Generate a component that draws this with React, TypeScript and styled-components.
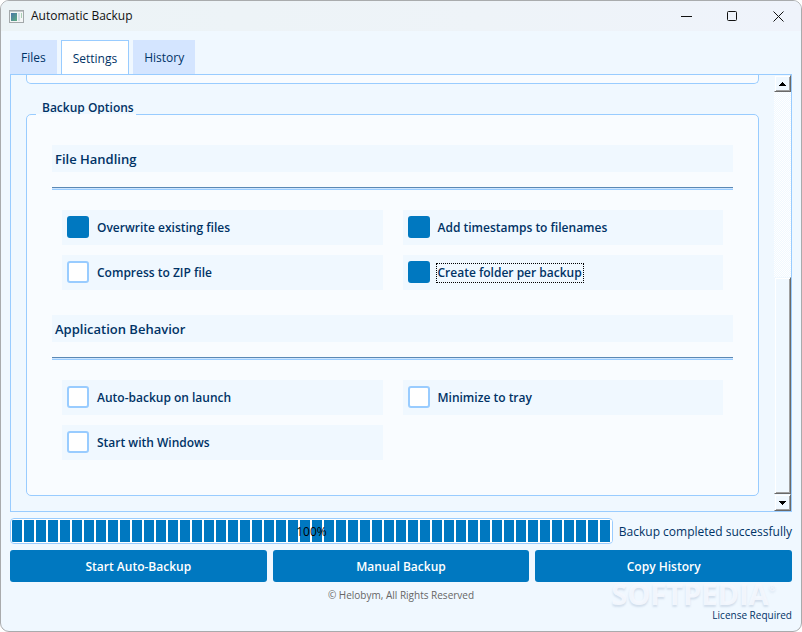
import React, { useState } from 'react';
import styled, { createGlobalStyle, css } from 'styled-components';

const color = {
  page: '#f0f8ff',
  surface: '#f9fcff',
  line: '#99ccff',
  accent: '#0078c0',
  text: '#003366',
  tab: '#d4e5ff',
};

const GlobalStyle = createGlobalStyle`
  *, *::before, *::after { box-sizing: border-box; }
  body { margin: 0; background: #ffffff; }
  body, button, input { font-family: "Open Sans", "Noto Sans", sans-serif; }
`;

const Window = styled.main`
  display: flex;
  flex-direction: column;
  min-height: 100vh;
  border: 1px solid #a9abad;
  border-radius: 9px;
  overflow: hidden;
  background: ${color.page};
  color: ${color.text};
  font-size: 12px;
  line-height: 16px;
`;

const TitleBar = styled.header`
  display: flex;
  align-items: center;
  height: 30px;
  padding-left: 8px;
  gap: 7px;
  background: linear-gradient(90deg, #ecf3f6, #eef3f8 60%, #eff3fb);
  color: #111111;
`;

const Title = styled.h1`
  flex: 1;
  margin: 0;
  font-size: 12px;
  font-weight: 400;
`;

const CaptionButtons = styled.div`
  display: flex;
`;

const CaptionButton = styled.button`
  display: flex;
  align-items: center;
  justify-content: center;
  width: 46px;
  height: 30px;
  padding: 0;
  border: 0;
  background: none;
  color: #111111;
`;

const Body = styled.div`
  display: flex;
  flex: 1;
  flex-direction: column;
  padding: 9px 9px 8px;
`;

const TabList = styled.div`
  display: flex;
  gap: 4px;
`;

const Tab = styled.button<{ $active: boolean }>`
  height: 34px;
  padding: 2px 11px 0;
  border: 0;
  background: ${color.tab};
  color: ${color.text};
  font-size: 12px;
  line-height: 16px;
  ${({ $active }) =>
    $active &&
    css`
      border: 1px solid ${color.line};
      border-bottom: 0;
      background: #ffffff;
    `}
`;

const Panel = styled.section`
  display: flex;
  flex: 1;
  border: 1px solid ${color.line};
`;

const PanelContent = styled.div`
  display: flex;
  flex: 1;
  flex-direction: column;
  padding: 0 15px 15px;
`;

const GroupEnd = styled.div`
  height: 9px;
  border: 1px solid ${color.line};
  border-top: 0;
  border-radius: 0 0 5px 5px;
  background: ${color.surface};
`;

const Group = styled.fieldset`
  display: flex;
  flex: 1;
  flex-direction: column;
  min-width: 0;
  margin: 14px 0 0;
  padding: 0;
  border: 0;
`;

const GroupTitle = styled.legend`
  height: 16px;
  margin-left: 10px;
  padding: 0 6px;
  font-weight: 600;
  line-height: 20px;
`;

const GroupBox = styled.div`
  position: relative;
  flex: 1;
  padding: 30px 25px 35px;
  border: 1px solid ${color.line};
  border-radius: 5px;
  background: ${color.surface};

  &::before {
    content: "";
    position: absolute;
    top: -1px;
    left: 9px;
    width: 100px;
    height: 1px;
    background: ${color.surface};
  }
`;

const SectionTitle = styled.h2`
  height: 27px;
  margin: 0;
  padding: 0 3px;
  background: ${color.page};
  font-size: 13px;
  font-weight: 600;
  line-height: 28px;
`;

const Divider = styled.hr`
  height: 3px;
  margin: 15px 0 20px;
  border: 0;
  border-top: 1px solid #5b88b4;
  border-bottom: 1px solid ${color.line};
  background: #cfe6ff;
`;

const Options = styled.div`
  display: grid;
  grid-template-columns: 1fr 1fr;
  gap: 10px 20px;
  padding: 0 10px;

  & + ${SectionTitle} {
    margin-top: 25px;
  }
`;

const Option = styled.label`
  display: flex;
  align-items: center;
  gap: 6px;
  height: 35px;
  padding: 0 5px 1px;
  background: ${color.page};
  font-weight: 600;
`;

const CheckBox = styled.input`
  appearance: none;
  width: 22px;
  height: 22px;
  margin: 0;
  border: 2px solid ${color.line};
  border-radius: 3px;
  background: #ffffff;

  &:checked {
    border-color: ${color.accent};
    background: ${color.accent};
  }
`;

const OptionText = styled.span<{ $focused: boolean }>`
  margin-top: 2px;
  padding: 1px;
  border: 1px dotted ${({ $focused }) => ($focused ? '#000000' : 'transparent')};
`;

const ScrollBar = styled.div`
  display: flex;
  flex-direction: column;
  width: 17px;
  background: repeating-conic-gradient(#ffffff 0 25%, #f0f8ff 0 50%) 0 0 / 2px 2px;
`;

const raised = css`
  border: 1px solid;
  border-color: #f0f8ff #696969 #696969 #f0f8ff;
  background: ${color.page};
  box-shadow: inset 1px 1px #ffffff, inset -1px -1px #a0a0a0;
`;

const ScrollButton = styled.button`
  display: flex;
  align-items: center;
  justify-content: center;
  width: 17px;
  height: 17px;
  padding: 0;
  ${raised}
`;

const ScrollTrack = styled.div`
  display: flex;
  flex: 1;
  flex-direction: column;
  justify-content: flex-end;
`;

const ScrollThumb = styled.div`
  height: 54%;
  ${raised}
`;

const StatusRow = styled.div`
  display: flex;
  align-items: center;
  gap: 6px;
  margin-top: 6px;
`;

const Progress = styled.div`
  position: relative;
  flex: 1;
  height: 26px;
  padding: 1px 0 1px 1px;
  border: 1px solid ${color.line};
  border-radius: 4px;
  background: #ffffff;
`;

const ProgressFill = styled.div`
  height: 100%;
  border-radius: 1px;
  background: repeating-linear-gradient(90deg, ${color.accent} 0 10px, #ffffff 10px 12px);
`;

const ProgressText = styled.span`
  position: absolute;
  inset: 0;
  color: #000000;
  line-height: 25px;
  text-align: center;
`;

const Status = styled.span`
  margin-top: 2px;
  white-space: nowrap;
`;

const Actions = styled.div`
  display: grid;
  grid-template-columns: repeat(3, 1fr);
  gap: 6px;
  margin-top: 6px;
`;

const Action = styled.button`
  height: 32px;
  padding: 0;
  border: 0;
  border-radius: 3px;
  background: ${color.accent};
  color: #ffffff;
  font-size: 12px;
  font-weight: 600;
`;

const Footer = styled.footer`
  position: relative;
  margin-top: 6px;
  font-size: 10px;
  line-height: 15px;
`;

const Copyright = styled.p`
  margin: 0;
  color: #666666;
  text-align: center;
`;

const License = styled.p`
  margin: 5px 0 0;
  text-align: right;
`;

const Watermark = styled.span`
  position: absolute;
  top: -7px;
  right: 16px;
  color: rgba(246, 249, 255, 0.9);
  font-size: 29px;
  font-weight: 700;
  line-height: 26px;
  text-shadow: 0 2px 2px rgba(90, 120, 160, 0.2);
  pointer-events: none;

  sup {
    font-size: 9px;
    font-weight: 400;
    line-height: 0;
    vertical-align: 14px;
  }
`;

const AppIcon = () => (
  <svg width="15" height="13" viewBox="0 0 15 13" aria-hidden="true">
    <defs>
      <linearGradient id="pane" x1="0" y1="0" x2="1" y2="1">
        <stop offset="0" stopColor="#4a76a8" />
        <stop offset="1" stopColor="#5fac80" />
      </linearGradient>
    </defs>
    <rect x="0.5" y="0.5" width="14" height="12" fill="#f4f6f6" stroke="#a3a8aa" />
    <rect x="1" y="1" width="13" height="1" fill="#c3c8ca" />
    <rect x="2" y="3" width="6" height="8" fill="url(#pane)" />
    <rect x="9" y="3" width="2" height="8" fill="#d5dfe6" />
    <rect x="12" y="3" width="1" height="5" fill="#a9cfb4" />
  </svg>
);

const Arrow = ({ down = false }: { down?: boolean }) => (
  <svg width="7" height="4" viewBox="0 0 7 4" shapeRendering="crispEdges" aria-hidden="true">
    <path d={down ? 'M0 0h7v1h-1v1h-1v1h-1v1h-1v-1h-1v-1h-1v-1h-1z' : 'M3 0h1v1h1v1h1v1h1v1h-7v-1h1v-1h1v-1h1z'} />
  </svg>
);

const captions = [
  { label: 'Minimize', path: 'M0 5.5h11' },
  { label: 'Maximize', path: 'M1.5 0.5h7a1 1 0 0 1 1 1v7a1 1 0 0 1-1 1h-7a1 1 0 0 1-1-1v-7a1 1 0 0 1 1-1z' },
  { label: 'Close', path: 'M0.5 0.5l10 10M10.5 0.5l-10 10' },
];

interface OptionItem {
  label: string;
  on?: boolean;
  focused?: boolean;
}

const sections: { title: string; options: OptionItem[] }[] = [
  {
    title: 'File Handling',
    options: [
      { label: 'Overwrite existing files', on: true },
      { label: 'Add timestamps to filenames', on: true },
      { label: 'Compress to ZIP file' },
      { label: 'Create folder per backup', on: true, focused: true },
    ],
  },
  {
    title: 'Application Behavior',
    options: [{ label: 'Auto-backup on launch' }, { label: 'Minimize to tray' }, { label: 'Start with Windows' }],
  },
];

export default function App() {
  const [tab, setTab] = useState('Settings');

  return (
    <>
      <GlobalStyle />
      <Window>
        <TitleBar>
          <AppIcon />
          <Title>Automatic Backup</Title>
          <CaptionButtons>
            {captions.map(({ label, path }) => (
              <CaptionButton key={label} aria-label={label}>
                <svg width="11" height="11" viewBox="0 0 11 11" aria-hidden="true">
                  <path d={path} fill="none" stroke="currentColor" />
                </svg>
              </CaptionButton>
            ))}
          </CaptionButtons>
        </TitleBar>
        <Body>
          <TabList role="tablist">
            {['Files', 'Settings', 'History'].map((name) => (
              <Tab key={name} role="tab" aria-selected={tab === name} $active={tab === name} onClick={() => setTab(name)}>
                {name}
              </Tab>
            ))}
          </TabList>
          <Panel role="tabpanel">
            <PanelContent>
              <GroupEnd />
              <Group>
                <GroupTitle>Backup Options</GroupTitle>
                <GroupBox>
                  {sections.map(({ title, options }) => (
                    <React.Fragment key={title}>
                      <SectionTitle>{title}</SectionTitle>
                      <Divider />
                      <Options>
                        {options.map(({ label, on = false, focused = false }) => (
                          <Option key={label}>
                            <CheckBox type="checkbox" defaultChecked={on} />
                            <OptionText $focused={focused}>{label}</OptionText>
                          </Option>
                        ))}
                      </Options>
                    </React.Fragment>
                  ))}
                </GroupBox>
              </Group>
            </PanelContent>
            <ScrollBar>
              <ScrollButton aria-label="Scroll up">
                <Arrow />
              </ScrollButton>
              <ScrollTrack>
                <ScrollThumb />
              </ScrollTrack>
              <ScrollButton aria-label="Scroll down">
                <Arrow down />
              </ScrollButton>
            </ScrollBar>
          </Panel>
          <StatusRow>
            <Progress role="progressbar" aria-label="Backup progress" aria-valuenow={100}>
              <ProgressFill />
              <ProgressText>100%</ProgressText>
            </Progress>
            <Status>Backup completed successfully</Status>
          </StatusRow>
          <Actions>
            <Action>Start Auto-Backup</Action>
            <Action>Manual Backup</Action>
            <Action>Copy History</Action>
          </Actions>
          <Footer>
            <Copyright>© Helobym, All Rights Reserved</Copyright>
            <License>License Required</License>
            <Watermark>
              SOFTPEDIA<sup>®</sup>
            </Watermark>
          </Footer>
        </Body>
      </Window>
    </>
  );
}
